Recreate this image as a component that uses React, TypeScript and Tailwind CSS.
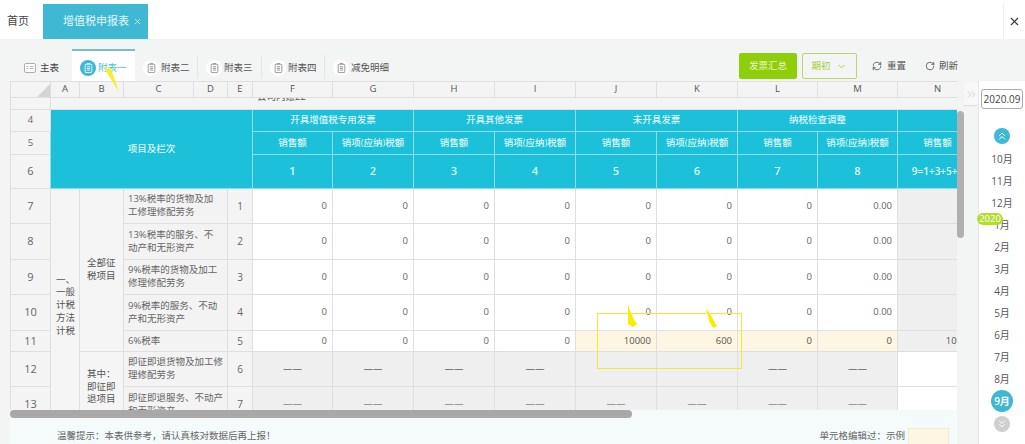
import { ChevronDown, ChevronsDown, ChevronsRight, ChevronsUp, RefreshCw, RotateCw, X } from "lucide-react";

const fontStack = "font-['Open_Sans','Noto_Sans_CJK_SC',sans-serif]";

const toolTabs = [
  { label: "附表二", width: "w-[63px]" },
  { label: "附表三", width: "w-[64px]" },
  { label: "附表四", width: "w-[63px]" },
];

const columnWidths = [40, 29, 44, 70, 34, 25, 80, 81, 81, 81, 81, 81, 80, 80, 80];
const letters = ["A", "B", "C", "D", "E", "F", "G", "H", "I", "J", "K", "L", "M", "N"];

const groups = ["开具增值税专用发票", "开具其他发票", "未开具发票", "纳税检查调整"];

const rows = [
  { no: 7, line: 1, h: "h-[35px]", label: "13%税率的货物及加\n工修理修配劳务" },
  { no: 8, line: 2, h: "h-[36px]", label: "13%税率的服务、不\n动产和无形资产" },
  { no: 9, line: 3, h: "h-[35px]", label: "9%税率的货物及加工\n修理修配劳务" },
  { no: 10, line: 4, h: "h-[36px]", label: "9%税率的服务、不动\n产和无形资产" },
];

const months = ["10月", "11月", "12月", "1月", "2月", "3月", "4月", "5月", "6月", "7月", "8月", "9月"];

const cellBorder = "border border-[#dfdfdf]";
const headBorder = "border border-[#8fdde9]";
const sideCell = `${cellBorder} bg-[#f4f4f4] text-center font-normal text-[#666]`;
const numCell = `${cellBorder} bg-white pr-[5px] text-right text-[#666]`;
const greyCell = `${cellBorder} bg-[#f0eff0] text-center font-medium text-[#222]`;
const editedCell = `${cellBorder} bg-[#fdf6e3] pr-[5px] text-right text-[#555]`;

function DocIcon({ active }: { active?: boolean }) {
  return (
    <span className={`flex h-[16px] w-[16px] shrink-0 items-center justify-center rounded-full ${active ? "bg-[#3fb8d4] text-white" : "bg-white text-[#888]"}`}>
      <svg viewBox="0 0 10 12" className="h-[10px] w-[9px]" fill="none" stroke="currentColor" strokeWidth="1">
        <rect x="1" y="1.5" width="8" height="10" rx="1" />
        <path d="M3 0.5h4M3 4.5h4M3 6.5h4M3 8.5h4" />
      </svg>
    </span>
  );
}

function MainIcon() {
  return (
    <span className="flex h-[16px] w-[16px] shrink-0 items-center justify-center">
      <svg viewBox="0 0 12 12" className="h-[12px] w-[12px]" fill="#fff" stroke="#999" strokeWidth="0.8">
        <rect x="0.5" y="1.5" width="11" height="9" rx="1.5" />
        <path d="M2.5 4.5h2M2.5 6.5h2M6 4.5h3.5M6 6.5h3.5" strokeWidth="0.7" />
      </svg>
    </span>
  );
}

function NumberCells({ last }: { last: string }) {
  return (
    <>
      {["F", "G", "H", "I", "J", "K", "L"].map((c) => (
        <td key={c} className={numCell}>0</td>
      ))}
      <td className={numCell}>{last}</td>
      <td className={`${cellBorder} bg-[#f0eff0]`} />
    </>
  );
}

export default function App() {
  return (
    <div className={`relative flex h-[444px] w-[1025px] flex-col overflow-hidden bg-[#f3f4f4] text-[9.5px] ${fontStack}`}>
      <div className="flex h-[39px] shrink-0 items-end bg-white">
        <div className="flex h-[35px] w-[43px] items-center pl-[7px] text-[11px] text-[#444]">首页</div>
        <div className="flex h-[35px] w-[105px] items-center bg-[#3fb8d4] pl-[20px] text-[11px] text-[#e6f8fb]">
          增值税申报表
          <X size={9} className="ml-[4px]" />
        </div>
        <div className="ml-auto flex h-[35px] w-[22px] items-center justify-center border-l border-[#eee] text-[#333]">
          <X size={13} />
        </div>
      </div>

      <div className="flex h-[42px] shrink-0 items-end justify-between pr-[67px] pl-[8px]">
        <div className="flex h-[32px] text-[#555]">
          <div className="flex w-[64px] items-center gap-[2px] pt-[6px] pl-[14px] text-[#444]">
            <MainIcon />
            主表
          </div>
          <div className="flex w-[63px] items-center gap-[2px] border-t-2 border-[#7fb9c4] bg-white pt-[4px] pl-[8px] text-[#4fc3dc]">
            <DocIcon active />
            附表一
          </div>
          {toolTabs.map((t) => (
            <div key={t.label} className={`flex ${t.width} items-center gap-[2px] pt-[6px] pl-[8px]`}>
              <DocIcon />
              <span className="flex-1">{t.label}</span>
              <span className="h-[24px] w-px self-start bg-[#e6e6e6]" />
            </div>
          ))}
          <div className="flex w-[72px] items-center gap-[2px] pt-[6px] pl-[8px]">
            <DocIcon />
            减免明细
          </div>
        </div>
        <div className="mb-[2px] flex h-[26px] items-center text-[#555]">
          <div className="flex h-full w-[58px] items-center justify-center rounded-[2px] bg-[#8fce0a] text-[#eaf8c8]">发票汇总</div>
          <div className="ml-[5px] flex h-full w-[55px] items-center justify-center gap-[6px] rounded-[2px] border border-[#b9d670] text-[#a3cf3a]">
            期初
            <ChevronDown size={11} />
          </div>
          <RefreshCw size={10} className="ml-[15px]" />
          <span className="ml-[5px]">重置</span>
          <RotateCw size={10} className="ml-[19px]" />
          <span className="ml-[4px]">刷新</span>
        </div>
      </div>

      <div className="flex min-h-0 flex-1">
        <div className="ml-[10px] flex w-[947px] shrink-0 flex-col">
          <div className="h-[329px] shrink-0 overflow-hidden">
            <table className="w-[967px] table-fixed border-collapse">
              <colgroup>
                {columnWidths.map((w, i) => (
                  <col key={i} style={{ width: w }} />
                ))}
              </colgroup>
              <tbody>
                <tr className="h-[16px] bg-[#f4f4f4] text-[#555]">
                  <td className={`${cellBorder} relative`}>
                    <svg viewBox="0 0 13 13" className="absolute right-0 bottom-0 h-[13px] w-[13px]">
                      <path d="M13 0V13H0Z" fill="#d4d4d4" />
                    </svg>
                  </td>
                  {letters.map((l) => (
                    <td key={l} className={`${cellBorder} text-center`}>{l}</td>
                  ))}
                </tr>
                <tr className="h-[11px]">
                  <td className={`${cellBorder} bg-[#f4f4f4]`} />
                  <td colSpan={14} className="border-b border-[#dfdfdf] bg-[#f3f4f4] p-0 text-[#555]">
                    <div className="h-[6px] overflow-hidden pl-[206px]">
                      <div className="-mt-[8px] leading-[14px]">公司内账22</div>
                    </div>
                    <div className="h-[5px]" />
                  </td>
                </tr>
                <tr className="h-[22px] bg-[#1cc0d9] text-center font-medium text-[#dff6f9]">
                  <td className={sideCell}>4</td>
                  <td colSpan={5} rowSpan={3} className={`${headBorder} bg-[#1cc0d9]`}>项目及栏次</td>
                  {groups.map((g) => (
                    <td key={g} colSpan={2} className={headBorder}>{g}</td>
                  ))}
                  <td className={headBorder} />
                </tr>
                <tr className="h-[23px] bg-[#1cc0d9] text-center font-medium text-[#dff6f9]">
                  <td className={sideCell}>5</td>
                  {["1", "2", "3", "4", "5", "6", "7", "8"].map((n, i) => (
                    <td key={n} className={`${headBorder} whitespace-nowrap`}>{i % 2 === 0 ? "销售额" : "销项(应纳)税额"}</td>
                  ))}
                  <td className={headBorder}>销售额</td>
                </tr>
                <tr className="h-[34px] bg-[#1cc0d9] text-center text-[11px] font-semibold text-[#dff6f9]">
                  <td className={sideCell}>6</td>
                  {["1", "2", "3", "4", "5", "6", "7", "8"].map((n) => (
                    <td key={n} className={headBorder}>{n}</td>
                  ))}
                  <td className={`${headBorder} text-[10px]`}>9=1+3+5+7</td>
                </tr>

                {rows.map((r, i) => (
                  <tr key={r.no} className={r.h}>
                    <td className={`${sideCell} text-[11px]`}>{r.no}</td>
                    {i === 0 && (
                      <td rowSpan={7} className={`${cellBorder} bg-[#f5f5f5] pl-[5px] leading-[12.7px] text-[#555]`}>
                        一、<br />一般<br />计税<br />方法<br />计税
                      </td>
                    )}
                    {i === 0 && (
                      <td rowSpan={5} className={`${cellBorder} bg-[#f5f5f5] pl-[7px] leading-[12.7px] text-[#555]`}>
                        全部征<br />税项目
                      </td>
                    )}
                    <td colSpan={2} className={`${cellBorder} bg-[#f3f3f3] pl-[4px] leading-[12.7px] whitespace-pre-line text-[#666]`}>{r.label}</td>
                    <td className={`${sideCell} text-[10px]`}>{r.line}</td>
                    <NumberCells last="0.00" />
                  </tr>
                ))}

                <tr className="h-[21px]">
                  <td className={`${sideCell} text-[11px]`}>11</td>
                  <td colSpan={2} className={`${cellBorder} bg-[#f3f3f3] pl-[4px] text-[#666]`}>6%税率</td>
                  <td className={`${sideCell} text-[10px]`}>5</td>
                  <td className={numCell}>0</td>
                  <td className={numCell}>0</td>
                  <td className={numCell}>0</td>
                  <td className={numCell}>0</td>
                  <td className={editedCell}>10000</td>
                  <td className={editedCell}>600</td>
                  <td className={editedCell}>0</td>
                  <td className={editedCell}>0</td>
                  <td className={`${cellBorder} bg-[#f0eff0] pr-[4px] text-right text-[#555]`}>10000</td>
                </tr>
                <tr className="h-[35px]">
                  <td className={`${sideCell} text-[11px]`}>12</td>
                  <td rowSpan={2} className={`${cellBorder} bg-[#f5f5f5] pl-[7px] leading-[12.7px] text-[#555]`}>
                    其中：<br />即征即<br />退项目
                  </td>
                  <td colSpan={2} className={`${cellBorder} bg-[#f3f3f3] pl-[4px] leading-[12.7px] whitespace-pre-line text-[#666]`}>{"即征即退货物及加工修\n理修配劳务"}</td>
                  <td className={`${sideCell} text-[10px]`}>6</td>
                  <td className={greyCell}>——</td>
                  <td className={greyCell}>——</td>
                  <td className={greyCell}>——</td>
                  <td className={greyCell}>——</td>
                  <td className={greyCell} />
                  <td className={greyCell} />
                  <td className={greyCell}>——</td>
                  <td className={greyCell}>——</td>
                  <td className={`${cellBorder} bg-white`} />
                </tr>
                <tr className="h-[36px]">
                  <td className={`${sideCell} text-[11px]`}>13</td>
                  <td colSpan={2} className={`${cellBorder} bg-[#f3f3f3] pl-[4px] leading-[12.7px] whitespace-pre-line text-[#666]`}>{"即征即退服务、不动产\n和无形资产"}</td>
                  <td className={`${sideCell} text-[10px]`}>7</td>
                  {["F", "G", "H", "I", "J", "K", "L", "M"].map((c) => (
                    <td key={c} className={`${greyCell} text-[#555]`}>——</td>
                  ))}
                  <td className={`${cellBorder} bg-white`} />
                </tr>
              </tbody>
            </table>
          </div>
          <div className="h-[8px] shrink-0 bg-[#f5fbfb]">
            <div className="h-full w-[622px] rounded-full bg-[#aaa7a8]" />
          </div>
          <div className="flex min-h-0 flex-1 items-start justify-between bg-[#f5fbfb] pr-[8px] pl-[47px] text-[#666]">
            <span className="mt-[11px] leading-[14px]">温馨提示：本表供参考，请认真核对数据后再上报！</span>
            <span className="flex items-start">
              <span className="mt-[11px] leading-[14px]">单元格编辑过：示例</span>
              <span className="mt-[10px] ml-[3px] h-[20px] w-[41px] border border-[#f3ead2] bg-[#fdf6e3]" />
            </span>
          </div>
        </div>

        <div className="w-[7px] shrink-0 pt-[30px]">
          <div className="h-[127px] rounded-full bg-[#b0b0b0]" />
        </div>

        <div className="w-[14px] shrink-0 pt-[2px]">
          <div className="flex h-[22px] items-center justify-center rounded-br-[2px] bg-[#f8f8f8] text-[#bbb] shadow-[0_1px_1px_#ddd]">
            <ChevronsRight size={13} strokeWidth={1.2} />
          </div>
        </div>

        <div className="flex w-[47px] shrink-0 flex-col items-center border-l border-[#e8e8e8] bg-white text-[10px] text-[#555]">
          <div className="mt-[8px] flex h-[20px] w-[42px] items-center justify-center rounded-[3px] border border-[#aaa] text-[#444]">2020.09</div>
          <div className="mt-[19px] flex h-[16px] w-[16px] items-center justify-center rounded-full bg-[#3fb8d4] text-white">
            <ChevronsUp size={12} />
          </div>
          <div className="mt-[4px] flex w-full flex-col items-center">
            {months.map((m) =>
              m === "9月" ? (
                <div key={m} className="flex h-[22px] w-[22px] items-center justify-center rounded-full bg-[#3fb8d4] font-semibold text-white">{m}</div>
              ) : (
                <div key={m} className="flex h-[22px] items-center">{m}</div>
              ),
            )}
          </div>
          <div className="mt-[4px] flex h-[16px] w-[16px] items-center justify-center rounded-full bg-[#cfcfcf] text-white">
            <ChevronsDown size={12} />
          </div>
        </div>
      </div>

      {/* annotations drawn over the screenshot */}
      <div className="absolute top-[313px] left-[597px] h-[56px] w-[145px] border border-[#efeb30]" />
      <div className="absolute top-[213px] left-[977px] h-[12px] w-[26px] rounded-full bg-[#b5dc2a] text-center text-[9.5px] leading-[12px] text-white">2020</div>
      <svg className="pointer-events-none absolute top-0 left-0 h-[444px] w-[1025px]" viewBox="0 0 1025 444">
        <path d="M104 68 111 69 119 92Z" fill="#f7ee2a" />
        <path d="M628 305 633 318 637 324 633 327 628 324Z" fill="#f5ee00" />
        <path d="M706 308 713 319 717 326 713 328 709 321Z" fill="#f5ee00" />
      </svg>
    </div>
  );
}
